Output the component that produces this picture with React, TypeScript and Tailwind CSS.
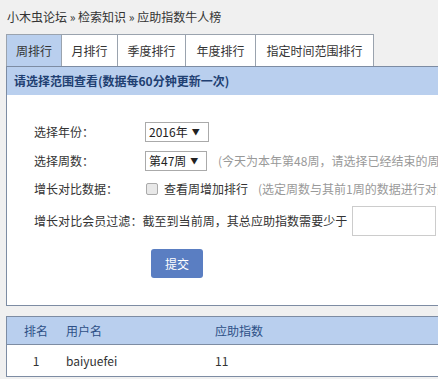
import React from "react";

const font = { fontFamily: '"Noto Sans CJK SC", "Noto Sans", sans-serif' };

export default function App() {
  const tabs = [
    { t: "周排行", w: "w-[56px]", active: true },
    { t: "月排行", w: "w-[56px]" },
    { t: "季度排行", w: "w-[68px]" },
    { t: "年度排行", w: "w-[70px]" },
    { t: "指定时间范围排行", w: "w-[118px]" },
  ];
  return (
    <div className="w-[438px] h-[379px] overflow-hidden bg-[#f0f0f0] text-[12px] text-[#333]" style={font}>
      <div className="w-[640px]">
        <div className="h-[34px] flex items-center pl-[7px] text-[12px] text-[#333]">
          小木虫论坛 » 检索知识 » 应助指数牛人榜
        </div>
        <div className="flex ml-[6px] h-[32px]">
          {tabs.map((tab, i) => (
            <div
              key={i}
              className={`${tab.w} flex items-center justify-center border-t border-r border-[#9aa3ae] ${i === 0 ? "border-l bg-[#b9cfee]" : "bg-white"} text-[12px] text-[#333]`}
            >
              {tab.t}
            </div>
          ))}
        </div>
        <div className="ml-[6px] w-[620px] border-l border-t border-b border-[#7d8ca3] bg-white">
          <div className="h-[28px] bg-[#b9cfee] flex items-center pl-[7px] font-bold text-[#1f3f72] text-[12px]">
            请选择范围查看(数据每60分钟更新一次)
          </div>
          <div className="pl-[27px] pt-[24px] pb-[27px]">
            <div className="flex items-center h-[22px] mt-[2px]">
              <div className="w-[111px]">选择年份：</div>
              <div className="h-[20px] w-[64px] border border-[#aaa] flex items-center pl-[3px] text-[12px] text-[#222]">
                2016年 <span className="ml-[4px] text-[8px]">▼</span>
              </div>
            </div>
            <div className="flex items-center h-[22px] mt-[7px]">
              <div className="w-[111px]">选择周数：</div>
              <div className="h-[20px] w-[62px] border border-[#aaa] flex items-center pl-[3px] text-[12px] text-[#222]">
                第47周 <span className="ml-[4px] text-[8px]">▼</span>
              </div>
              <div className="ml-[11px] text-[#999] whitespace-nowrap">(今天为本年第48周，请选择已经结束的周进行查看)</div>
            </div>
            <div className="flex items-center h-[22px] mt-[6px]">
              <div className="w-[111px]">增长对比数据：</div>
              <div className="w-[12px] h-[12px] border border-[#aaa] bg-[#e8e8e8] rounded-[2px] ml-[1px]"></div>
              <div className="ml-[6px] whitespace-nowrap">查看周增加排行</div>
              <div className="ml-[10px] text-[#999] whitespace-nowrap">(选定周数与其前1周的数据进行对比)</div>
            </div>
            <div className="flex items-center h-[30px] mt-[6px]">
              <div className="whitespace-nowrap tracking-[0.05px]">增长对比会员过滤：截至到当前周，其总应助指数需要少于</div>
              <div className="ml-[5px] w-[84px] h-[30px] border border-[#ccc] bg-white"></div>
            </div>
            <div className="mt-[13px] ml-[117px] w-[52px] h-[29px] bg-[#5a7ec2] rounded-[3px] text-white flex items-center justify-center text-[12px]">
              提交
            </div>
          </div>
        </div>
        <div className="ml-[6px] mt-[10px] w-[620px] border-l border-t border-b border-[#7d8ca3] bg-white">
          <div className="h-[28px] bg-[#b9cfee] flex items-center border-b border-[#7d8ca3] text-[#2d4f86]">
            <div className="w-[58px] text-center">排名</div>
            <div className="w-[150px] pl-[1px]">用户名</div>
            <div>应助指数</div>
          </div>
          <div className="h-[31px] flex items-center text-[#333]">
            <div className="w-[58px] text-center">1</div>
            <div className="w-[150px] pl-[1px]">baiyuefei</div>
            <div>11</div>
          </div>
        </div>
      </div>
    </div>
  );
}
